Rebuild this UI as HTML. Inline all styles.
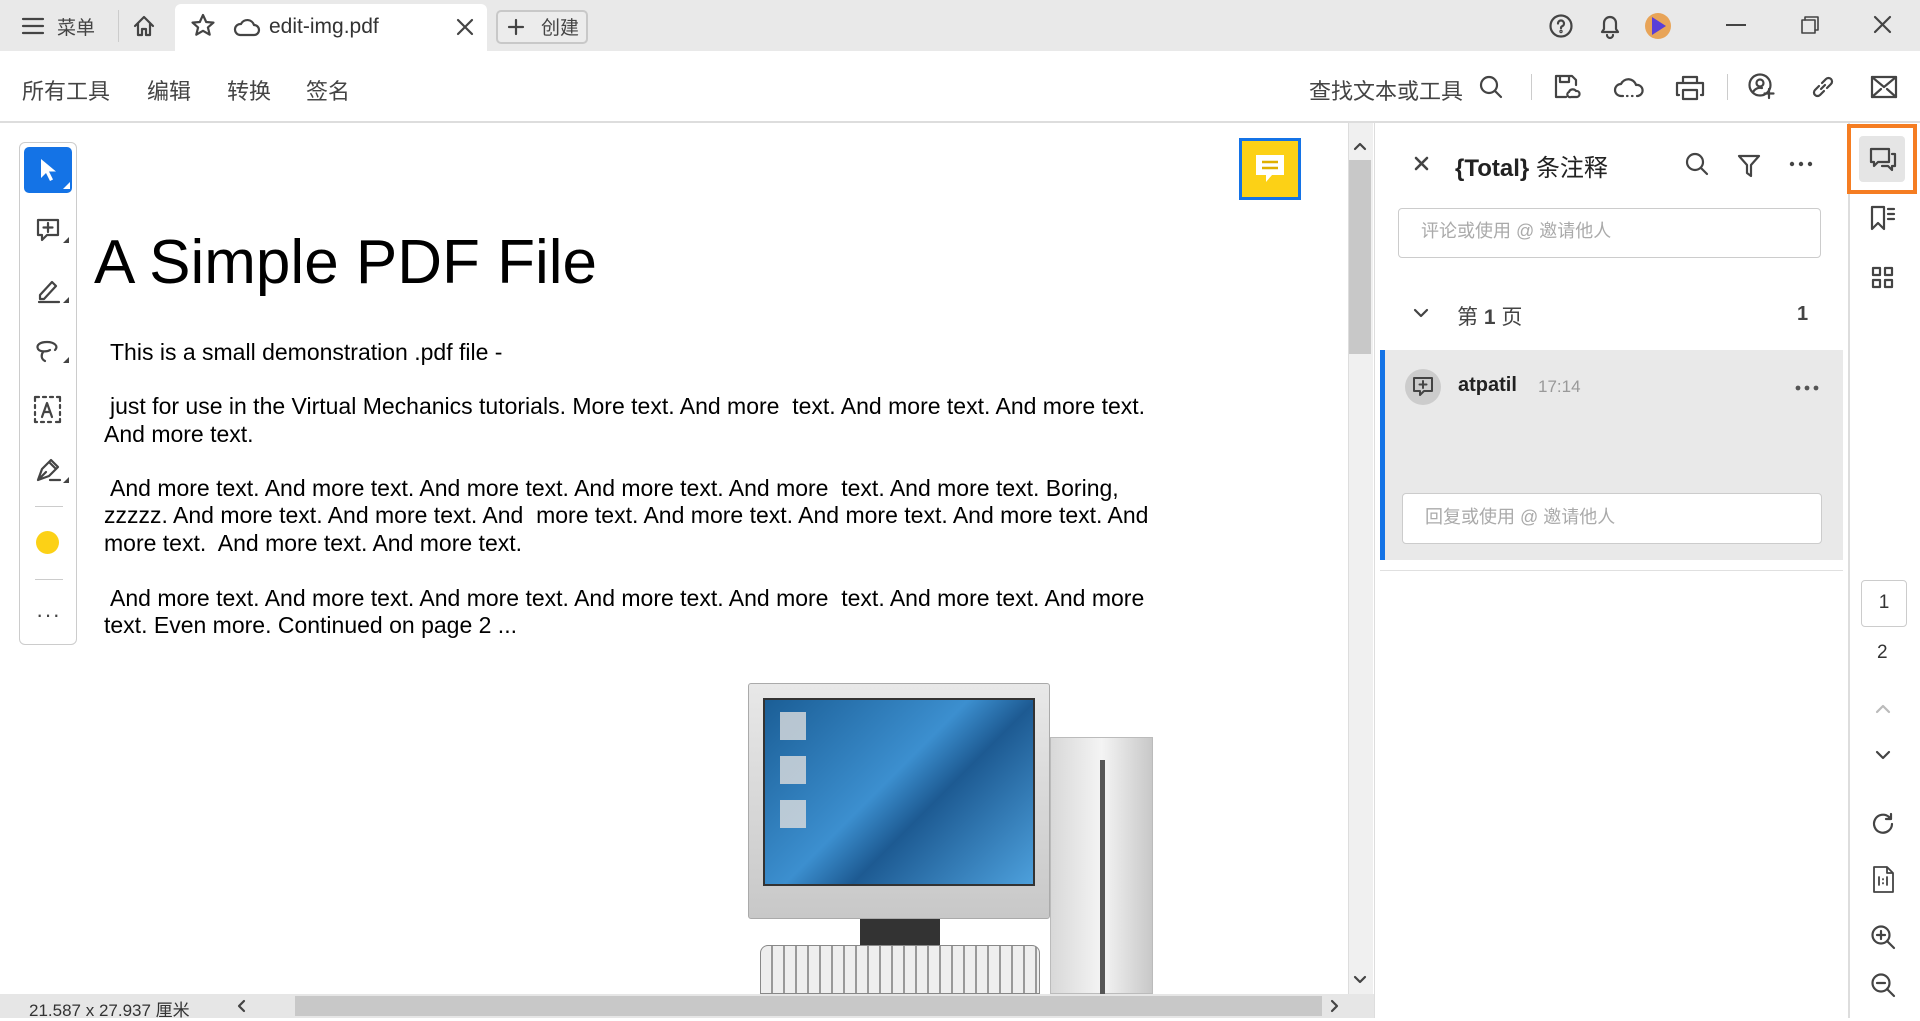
<!DOCTYPE html>
<html><head><meta charset="utf-8"><style>
*{margin:0;padding:0;box-sizing:border-box}
body{width:1920px;height:1018px;overflow:hidden;background:#fff;font-family:"Liberation Sans","Noto Sans CJK SC",sans-serif;color:#222;position:relative}
.a{position:absolute}
.t{font-size:22px;color:#444;white-space:nowrap}
svg{position:absolute;overflow:visible}
.ic{fill:none;stroke:#444;stroke-width:2.2;stroke-linecap:round;stroke-linejoin:round}
.p{position:absolute;font-size:23px;color:#000;white-space:nowrap;font-family:"Liberation Sans",Arial,sans-serif}
</style></head><body>
<!-- title bar -->
<div class="a" style="left:0;top:0;width:1920px;height:51px;background:#e9e9e9"></div>
<svg class="ic" style="left:22px;top:17px" width="22" height="18"><path d="M1 2h20M1 9h20M1 16h20"/></svg>
<div class="a t" style="left:57px;top:13px;font-size:19px">菜单</div>
<div class="a" style="left:118px;top:10px;width:1px;height:32px;background:#ccc"></div>
<svg class="ic" style="left:133px;top:15px" width="22" height="22"><path d="M2 11L11 2l9 9M5 8v12h4v-6h4v6h4V8"/></svg>
<div class="a" style="left:175px;top:4px;width:312px;height:47px;background:#fff;border-radius:6px 6px 0 0"></div>
<svg class="ic" style="left:191px;top:14px" width="24" height="24"><path d="M12 1l3.2 7 7.3.6-5.6 4.8 1.8 7.3L12 16.8 5.3 20.7l1.8-7.3L1.5 8.6 8.8 8z"/></svg>
<svg class="ic" style="left:234px;top:17px" width="26" height="20"><path d="M6 18h14a5 5 0 0 0 0-10 7 7 0 0 0-13-1A5 5 0 0 0 6 18z"/></svg>
<div class="a t" style="left:269px;top:15px;font-size:21px;color:#333">edit-img.pdf</div>
<svg class="ic" style="left:457px;top:19px" width="16" height="16"><path d="M1 1l14 14M15 1L1 15"/></svg>
<div class="a" style="left:496px;top:10px;width:92px;height:34px;border:2px solid #c8c8c8;border-radius:5px;background:#ececec"></div>
<svg class="ic" style="left:508px;top:19px" width="16" height="16"><path d="M8 1v14M1 8h14"/></svg>
<div class="a t" style="left:541px;top:13px;font-size:19px">创建</div>
<svg class="ic" style="left:1549px;top:14px" width="24" height="24"><circle cx="12" cy="12" r="10.5"/><path d="M9 9.5a3 3 0 1 1 4 2.8c-1 .4-1 1-1 2"/><circle cx="12" cy="17.5" r=".6"/></svg>
<svg class="ic" style="left:1599px;top:13px" width="22" height="26"><path d="M3 19h16l-2-3V10a6 6 0 0 0-12 0v6zM8 22a3 3 0 0 0 6 0"/></svg>
<div class="a" style="left:1645px;top:13px;width:26px;height:26px;border-radius:50%;background:#e8a458"></div>
<div class="a" style="left:1652px;top:17px;width:0;height:0;border-top:9px solid transparent;border-bottom:9px solid transparent;border-left:14px solid #5a3fd8"></div>
<div class="a" style="left:1726px;top:24px;width:20px;height:2px;background:#444"></div>
<svg class="ic" style="left:1801px;top:16px;stroke-width:1.6" width="18" height="18"><rect x="1" y="4" width="13" height="13"/><path d="M4 4V1h13v13h-3"/></svg>
<svg class="ic" style="left:1874px;top:16px" width="17" height="17"><path d="M1 1l15 15M16 1L1 16"/></svg>
<!-- toolbar -->
<div class="a" style="left:0;top:121px;width:1920px;height:2px;background:#ddd"></div>
<div class="a t" style="left:22px;top:74px">所有工具</div>
<div class="a t" style="left:147px;top:74px">编辑</div>
<div class="a t" style="left:227px;top:74px">转换</div>
<div class="a t" style="left:306px;top:74px">签名</div>
<div class="a t" style="left:1309px;top:74px">查找文本或工具</div>
<svg class="ic" style="left:1479px;top:75px" width="24" height="24"><circle cx="10" cy="10" r="8"/><path d="M16 16l6 6"/></svg>
<div class="a" style="left:1531px;top:74px;width:1px;height:26px;background:#ccc"></div>
<svg class="ic" style="left:1554px;top:74px" width="26" height="26"><path d="M12 23H2V2h16l4 4v5M6 2v6h9V2M17 23h6a3 3 0 0 0-1-6 4 4 0 0 0-7 1 2.5 2.5 0 0 0 2 5z"/></svg>
<svg class="ic" style="left:1614px;top:76px" width="30" height="22"><path d="M9 20H7a6 6 0 0 1 0-12 8 8 0 0 1 15 1 5.5 5.5 0 0 1 2 11M13 20h.5M18 20h.5M23 20h.5"/></svg>
<svg class="ic" style="left:1676px;top:75px" width="28" height="26"><path d="M7 8V2h14v6M3 20H1V8h26v12h-2M7 15h14v9H7z"/></svg>
<div class="a" style="left:1727px;top:74px;width:1px;height:26px;background:#ccc"></div>
<svg class="ic" style="left:1748px;top:73px" width="28" height="28"><circle cx="12" cy="12" r="10.5"/><circle cx="12" cy="10" r="3.5"/><path d="M5 19a8 8 0 0 1 9-4M21 16v9M16.5 20.5h9"/></svg>
<svg class="ic" style="left:1810px;top:74px" width="26" height="26"><path d="M11 15l4-4M9 12l-4 4a3.5 3.5 0 0 0 5 5l4-4M17 14l4-4a3.5 3.5 0 0 0-5-5l-4 4"/></svg>
<svg class="ic" style="left:1871px;top:76px" width="26" height="22"><rect x="1" y="1" width="24" height="20"/><path d="M1 1l12 10 12-10M1 21l9-8M25 21l-9-8"/></svg>
<!-- left toolbar -->
<div class="a" style="left:19px;top:142px;width:58px;height:503px;border:1.5px solid #ccc;border-radius:6px;background:#fff"></div>
<div class="a" style="left:24px;top:147px;width:48px;height:46px;background:#1473e6;border-radius:5px"></div>
<svg style="left:39px;top:158px" width="20" height="26"><path d="M2 1v19l5-5 4 8 3-1.5-4-8h7z" fill="#fff"/></svg>
<svg style="left:63px;top:182px" width="7" height="7"><path d="M7 0v7H0z" fill="#fff"/></svg>
<svg class="ic" style="left:36px;top:218px" width="26" height="26"><path d="M2 2h20v15H11l-5 5v-5H2zM12 5v9M7.5 9.5h9"/></svg>
<svg class="ic" style="left:36px;top:277px" width="26" height="26"><path d="M4 18l12-13 4 4L8 22H4zM3 25h20"/></svg>
<svg class="ic" style="left:35px;top:339px" width="28" height="26"><path d="M20 11c4-4-1-8-8-8S1 6 3 10c2 3 9 3 12 1M8 13c-2 3-2 7 2 9"/></svg>
<svg class="ic" style="left:34px;top:396px" width="28" height="28"><path d="M1 5V1h4M9 1h3M16 1h3M23 1h3v4M26 9v3M26 16v3M26 23v3h-4M17 26h-3M10 26H7M3 26H1v-3M1 19v-3M1 12V9M8 21l5-14 5 14M10 16h6"/></svg>
<svg class="ic" style="left:35px;top:456px" width="28" height="28"><path d="M3 24l4-11 9-9 7 7-9 9zM3 24l8-8M14 6l7 7M15 24h10"/></svg>
<div class="a" style="left:35px;top:506px;width:28px;height:1px;background:#ccc"></div>
<div class="a" style="left:36px;top:531px;width:23px;height:23px;border-radius:50%;background:#fcd116"></div>
<div class="a" style="left:35px;top:579px;width:28px;height:1px;background:#ccc"></div>
<div class="a" style="left:36px;top:602px;font-size:22px;color:#444;letter-spacing:1px">···</div>
<svg style="left:63px;top:237px" width="6" height="6"><path d="M6 0v6H0z" fill="#444"/></svg>
<svg style="left:63px;top:297px" width="6" height="6"><path d="M6 0v6H0z" fill="#444"/></svg>
<svg style="left:63px;top:357px" width="6" height="6"><path d="M6 0v6H0z" fill="#444"/></svg>
<svg style="left:63px;top:477px" width="6" height="6"><path d="M6 0v6H0z" fill="#444"/></svg>
<!-- yellow note -->
<div class="a" style="left:1239px;top:138px;width:62px;height:62px;border:3px solid #1473e6;background:#fcd116"></div>
<svg style="left:1254px;top:153px" width="32" height="34"><path d="M2 2h28v20H18l-6 7v-7H2z" fill="#fff"/><path d="M8 9h16M8 15h16" stroke="#e0b000" stroke-width="2.5"/></svg>
<!-- pdf text -->
<div class="p" style="left:94px;top:227px;font-size:62px">A Simple PDF File</div>
<div class="p" style="left:110px;top:339px">This is a small demonstration .pdf file -</div>
<div class="p" style="left:110px;top:393px">just for use in the Virtual Mechanics tutorials. More text. And more&nbsp; text. And more text. And more text.</div>
<div class="p" style="left:104px;top:421px">And more text.</div>
<div class="p" style="left:110px;top:475px">And more text. And more text. And more text. And more text. And more&nbsp; text. And more text. Boring,</div>
<div class="p" style="left:104px;top:502px">zzzzz. And more text. And more text. And&nbsp; more text. And more text. And more text. And more text. And</div>
<div class="p" style="left:104px;top:530px">more text.&nbsp; And more text. And more text.</div>
<div class="p" style="left:110px;top:585px">And more text. And more text. And more text. And more text. And more&nbsp; text. And more text. And more</div>
<div class="p" style="left:104px;top:612px">text. Even more. Continued on page 2 ...</div>
<!-- computer -->
<div class="a" style="left:1050px;top:737px;width:103px;height:257px;background:linear-gradient(90deg,#d8d8d8,#f4f4f4,#c8c8c8);border:1px solid #bbb"></div>
<div class="a" style="left:1100px;top:760px;width:5px;height:234px;background:#555"></div>
<div class="a" style="left:748px;top:683px;width:302px;height:236px;background:linear-gradient(#e8e8e8,#c8c8c8);border:1px solid #aaa;border-radius:3px"></div>
<div class="a" style="left:763px;top:698px;width:272px;height:188px;background:linear-gradient(135deg,#1b5e96,#3c8fcf 45%,#1d5a92 60%,#4da0dc);border:2px solid #333"></div>
<div class="a" style="left:780px;top:712px;width:26px;height:120px;background:repeating-linear-gradient(#ddd 0 28px,transparent 28px 44px);opacity:.8"></div>
<div class="a" style="left:860px;top:919px;width:80px;height:26px;background:#333"></div>
<div class="a" style="left:760px;top:945px;width:280px;height:49px;background:repeating-linear-gradient(90deg,#eee 0 10px,#999 10px 12px);border:1px solid #888;border-radius:8px 8px 0 0"></div>
<!-- vertical scrollbar -->
<div class="a" style="left:1348px;top:123px;width:25px;height:871px;background:#f0f0f0;border-left:1px solid #ddd"></div>
<div class="a" style="left:1349px;top:160px;width:22px;height:194px;background:#c8c8c8"></div>
<svg class="ic" style="left:1354px;top:142px" width="12" height="8"><path d="M1 7l5-5 5 5"/></svg>
<svg class="ic" style="left:1354px;top:976px" width="12" height="8"><path d="M1 1l5 5 5-5"/></svg>
<!-- status bar -->
<div class="a" style="left:0;top:994px;width:1374px;height:24px;background:#e6e6e6"></div>
<div class="a" style="left:29px;top:996px;font-size:17px;color:#333">21.587 x 27.937 厘米</div>
<div class="a" style="left:295px;top:996px;width:1027px;height:20px;background:#c8c8c8"></div>
<svg class="ic" style="left:237px;top:1000px" width="8" height="12"><path d="M7 1L2 6l5 5"/></svg>
<svg class="ic" style="left:1331px;top:1000px" width="8" height="12"><path d="M1 1l5 5-5 5"/></svg>
<!-- right panel -->
<div class="a" style="left:1374px;top:123px;width:1px;height:895px;background:#ddd"></div>
<div class="a" style="left:1848px;top:123px;width:2px;height:895px;background:#ddd"></div>
<svg class="ic" style="left:1415px;top:157px;stroke-width:2.6" width="13" height="13"><path d="M1 1l11 11M12 1L1 12"/></svg>
<div class="a" style="left:1455px;top:148px;font-size:24px;font-weight:bold;color:#222">{Total} <span style="font-weight:normal">条注释</span></div>
<svg class="ic" style="left:1685px;top:152px" width="24" height="24"><circle cx="10" cy="10" r="8"/><path d="M16 16l6 6"/></svg>
<svg class="ic" style="left:1738px;top:154px" width="22" height="24"><path d="M1 2h20l-8 9v11l-4-3v-8z"/></svg>
<svg style="left:1789px;top:161px" width="24" height="6"><circle cx="3" cy="3" r="2.2" fill="#444"/><circle cx="12" cy="3" r="2.2" fill="#444"/><circle cx="21" cy="3" r="2.2" fill="#444"/></svg>
<div class="a" style="left:1398px;top:208px;width:423px;height:50px;border:1.5px solid #ccc;border-radius:4px"></div>
<div class="a" style="left:1421px;top:217px;font-size:18px;color:#aaa">评论或使用 @ 邀请他人</div>
<svg class="ic" style="left:1414px;top:309px" width="14" height="9"><path d="M1 1l6 6 6-6"/></svg>
<div class="a" style="left:1457px;top:301px;font-size:21px;color:#444">第 <b>1</b> 页</div>
<div class="a" style="left:1797px;top:303px;font-size:20px;font-weight:bold;color:#444">1</div>
<div class="a" style="left:1380px;top:350px;width:463px;height:210px;background:#e9e9e9;border-left:5px solid #1473e6"></div>
<div class="a" style="left:1380px;top:570px;width:463px;height:1px;background:#e0e0e0"></div>
<div class="a" style="left:1405px;top:369px;width:36px;height:36px;border-radius:50%;background:#ccc"></div>
<svg class="ic" style="left:1412px;top:376px;stroke-width:2" width="22" height="22"><path d="M2 2h18v13h-8l-4 4v-4H2zM11 5v7M7.5 8.5h7"/></svg>
<div class="a" style="left:1458px;top:374px;font-size:20px;font-weight:bold;color:#222">atpatil</div>
<div class="a" style="left:1538px;top:377px;font-size:17px;color:#999">17:14</div>
<svg style="left:1795px;top:385px" width="24" height="6"><circle cx="3" cy="3" r="2.4" fill="#555"/><circle cx="12" cy="3" r="2.4" fill="#555"/><circle cx="21" cy="3" r="2.4" fill="#555"/></svg>
<div class="a" style="left:1402px;top:493px;width:420px;height:51px;border:1.5px solid #ccc;border-radius:4px;background:#fff"></div>
<div class="a" style="left:1425px;top:503px;font-size:18px;color:#aaa">回复或使用 @ 邀请他人</div>
<!-- far right rail -->
<div class="a" style="left:1847px;top:124px;width:70px;height:70px;border:4px solid #f57d22"></div>
<div class="a" style="left:1859px;top:136px;width:46px;height:46px;background:#e5e5e5;border-radius:4px"></div>
<svg class="ic" style="left:1869px;top:147px" width="28" height="26"><path d="M2 2h18v13H9l-4 4v-4H2zM23 7h3v12h-3v4l-4-4h-6"/></svg>
<svg class="ic" style="left:1870px;top:205px" width="26" height="26"><path d="M2 2h12v22l-6-6-6 6zM18 4h6M18 9h6M18 14h6"/></svg>
<svg class="ic" style="left:1872px;top:267px" width="22" height="22"><rect x="1" y="1" width="7" height="7"/><rect x="13" y="1" width="7" height="7"/><rect x="1" y="13" width="7" height="7"/><rect x="13" y="13" width="7" height="7"/></svg>
<div class="a" style="left:1861px;top:580px;width:46px;height:47px;border:1.5px solid #ccc;border-radius:4px;text-align:center;line-height:44px;font-size:19px;color:#333">1</div>
<div class="a" style="left:1877px;top:642px;font-size:19px;color:#333">2</div>
<svg class="ic" style="left:1876px;top:704px;stroke:#bbb" width="14" height="9"><path d="M1 8l6-6 6 6"/></svg>
<svg class="ic" style="left:1876px;top:751px" width="14" height="9"><path d="M1 1l6 6 6-6"/></svg>
<svg class="ic" style="left:1871px;top:812px" width="24" height="24"><path d="M21 12a9 9 0 1 1-3-7M20 2v5h-5"/></svg>
<svg class="ic" style="left:1872px;top:866px;stroke-width:1.8" width="24" height="28"><path d="M2 1h13l6 6v19H2zM15 1v6h6M7 11v8M11 13v.5M11 17v.5M15 11v8"/></svg>
<svg class="ic" style="left:1870px;top:924px" width="26" height="26"><circle cx="11" cy="11" r="8.5"/><path d="M17 17l7 7M11 7v8M7 11h8"/></svg>
<svg class="ic" style="left:1870px;top:972px" width="26" height="26"><circle cx="11" cy="11" r="8.5"/><path d="M17 17l7 7M7 11h8"/></svg>
</body></html>
